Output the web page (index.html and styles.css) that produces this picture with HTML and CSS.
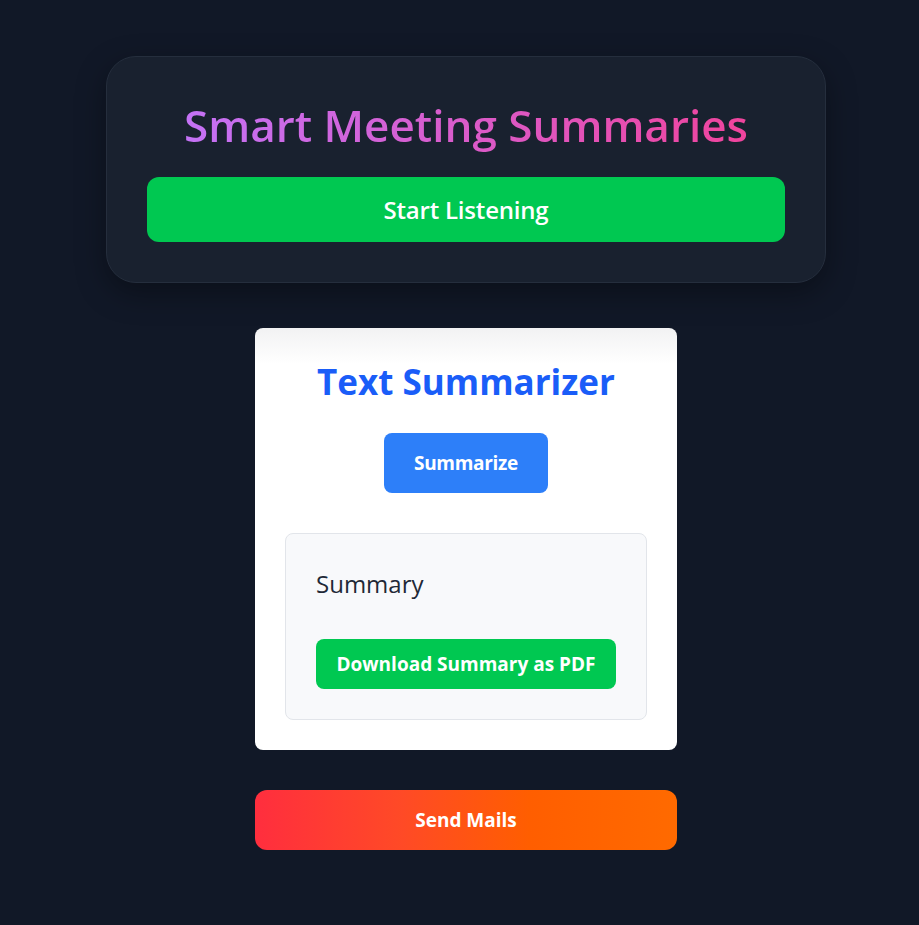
FILE: index.html
```html
<!DOCTYPE html>
<html lang="en">
<head>
<meta charset="utf-8">
<title>Smart Meeting Summaries</title>
<link rel="stylesheet" href="styles.css">
</head>
<body>
<main class="page">
  <section class="hero">
    <h1 class="hero-title">Smart Meeting Summaries</h1>
    <button class="btn btn-listen">Start Listening</button>
  </section>

  <section class="summarizer">
    <h2 class="summarizer-title">Text Summarizer</h2>
    <button class="btn btn-summarize">Summarize</button>
    <div class="summary-box">
      <h3 class="summary-heading">Summary</h3>
      <button class="btn btn-download">Download Summary as PDF</button>
    </div>
  </section>

  <button class="btn btn-mail">Send Mails</button>
</main>
</body>
</html>
```

FILE: styles.css
```css
* { box-sizing: border-box; }

html, body {
  margin: 0;
  padding: 0;
  background: #111827;
  height: 100%;
}

body {
  font-family: "Open Sans", "Noto Sans", "Liberation Sans", sans-serif;
}

.page {
  display: flex;
  flex-direction: column;
  align-items: center;
  padding-top: 56px;
  padding-left: 13px;
}

.hero {
  width: 720px;
  background: #19212f;
  border: 1px solid #252e3d;
  border-radius: 30px;
  padding: 40px;
  box-shadow: 0 10px 30px rgba(0, 0, 0, 0.35);
  display: flex;
  flex-direction: column;
  align-items: stretch;
}

.hero-title {
  margin: 0 0 24px;
  text-align: center;
  font-size: 44px;
  line-height: 56px;
  font-weight: 600;
  background: linear-gradient(90deg, #c472f6, #f0449d);
  -webkit-background-clip: text;
  background-clip: text;
  color: transparent;
  align-self: center;
}

.btn {
  border: none;
  color: #fff;
  font-family: inherit;
  cursor: pointer;
  padding: 0;
}

.btn-listen {
  height: 65px;
  background: #00c851;
  border-radius: 12px;
  font-size: 24px;
  font-weight: 600;
  letter-spacing: -0.2px;
}

.summarizer {
  margin-top: 45px;
  width: 422px;
  background: linear-gradient(180deg, #f2f2f3 0px, #ffffff 36px);
  border-radius: 8px;
  padding: 30px;
  display: flex;
  flex-direction: column;
  align-items: center;
}

.summarizer-title {
  margin: 0 0 27px;
  color: #1a5df8;
  font-size: 35px;
  line-height: 48px;
  font-weight: 700;
}

.btn-summarize {
  width: 164px;
  height: 60px;
  background: #2d7ff9;
  border-radius: 8px;
  font-size: 19px;
  font-weight: 700;
  letter-spacing: -0.3px;
}

.summary-box {
  margin-top: 40px;
  align-self: stretch;
  background: #f8f9fb;
  border: 1px solid #e2e5ea;
  border-radius: 8px;
  padding: 30px;
  display: flex;
  flex-direction: column;
  align-items: flex-start;
}

.summary-heading {
  margin: 0 0 35px;
  color: #1f2937;
  font-size: 24px;
  line-height: 40px;
  font-weight: 400;
}

.btn-download {
  width: 300px;
  height: 50px;
  background: #00c851;
  border-radius: 8px;
  font-size: 19px;
  font-weight: 700;
}

.btn-mail {
  margin-top: 40px;
  width: 422px;
  height: 60px;
  border-radius: 12px;
  background: linear-gradient(90deg, #ff2e3e 0%, #ff4a26 35%, #ff5e00 65%, #ff6a00 100%);
  font-size: 19px;
  font-weight: 700;
}
```
